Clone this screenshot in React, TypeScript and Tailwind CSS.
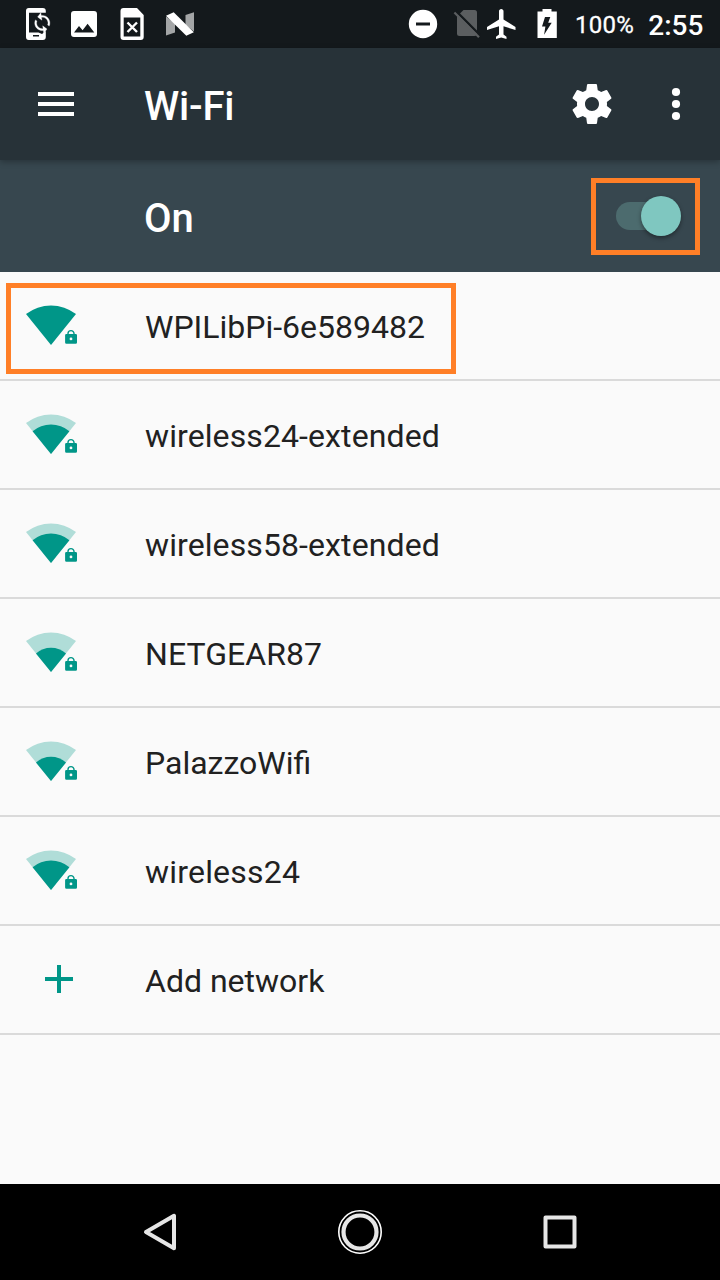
import React from "react";

type Strength = "full" | "good" | "fair";

const networks: { name: string; strength: Strength; tracking: string; marked?: boolean }[] = [
  { name: "WPILibPi-6e589482", strength: "full", tracking: "tracking-normal", marked: true },
  { name: "wireless24-extended", strength: "good", tracking: "tracking-[0.1px]" },
  { name: "wireless58-extended", strength: "good", tracking: "tracking-[0.1px]" },
  { name: "NETGEAR87", strength: "fair", tracking: "tracking-[0.05px]" },
  { name: "PalazzoWifi", strength: "fair", tracking: "tracking-normal" },
  { name: "wireless24", strength: "good", tracking: "tracking-[0.2px]" },
];

const wedges: Record<Strength, string> = {
  full: "M2 11A41 41 0 0 1 52 11L27 42Z",
  good: "M8.6 19.2A28.7 28.7 0 0 1 45.4 19.2L27 42Z",
  fair: "M12 23.5A22.6 22.6 0 0 1 42 23.5L27 42Z",
};

function WifiIcon({ strength }: { strength: Strength }) {
  return (
    <svg className="h-[45px] w-14 shrink-0" viewBox="0 0 56 45" fill="#009688">
      {strength !== "full" && <path d={wedges.full} fill="#b0ddd8" />}
      <path d={wedges[strength]} />
      <path d="M44 32V30.6a3 3 0 0 1 6 0V32" fill="none" stroke="#009688" strokeWidth="1.4" />
      <path
        fillRule="evenodd"
        d="M42.4 31h9.3a1.3 1.3 0 0 1 1.3 1.3v7.1a1.3 1.3 0 0 1-1.3 1.3h-9.3a1.3 1.3 0 0 1-1.3-1.3v-7.1a1.3 1.3 0 0 1 1.3-1.3zM47 34.5a1.4 1.4 0 1 0 0 2.8a1.4 1.4 0 0 0 0-2.8z"
      />
    </svg>
  );
}

function StatusBar() {
  return (
    <div className="flex h-12 items-center bg-[#14191c] text-white">
      <svg className="ml-6 h-9 w-7" viewBox="24 6 28 36" fill="#fff">
        <path
          fillRule="evenodd"
          d="M29.2 8H42.8A3 3 0 0 1 45.8 11V12.7H29V32.5H38.5L42 34L45.8 31V37A3 3 0 0 1 42.8 40H29.2A3 3 0 0 1 26 37V11A3 3 0 0 1 29.2 8zM33 35V36.6H39V35z"
        />
        <path
          transform="translate(42.3 23) rotate(-8) scale(.95) translate(-12 -12)"
          stroke="#fff"
          strokeWidth=".3"
          d="M12 4V1L8 5l4 4V6c3.31 0 6 2.69 6 6 0 1.01-.25 1.97-.7 2.8l1.46 1.46C19.54 15.03 20 13.57 20 12c0-4.42-3.58-8-8-8zm0 14c-3.31 0-6-2.69-6-6 0-1.01.25-1.97.7-2.8L5.24 7.74C4.46 8.97 4 10.43 4 12c0 4.42 3.58 8 8 8v3l4-4-4-4v3z"
        />
      </svg>
      <svg className="ml-[18px] h-7 w-7" viewBox="70 10 28 28">
        <path
          fill="#fff"
          fillRule="evenodd"
          d="M74 11H94A3 3 0 0 1 97 14V34A3 3 0 0 1 94 37H74A3 3 0 0 1 71 34V14A3 3 0 0 1 74 11zM74 32.5H94.3L87.6 23.7L82.6 30.2L79 25.9z"
        />
      </svg>
      <svg className="ml-[21px] h-9 w-[26px]" viewBox="119 6 26 36">
        <path
          fill="#fff"
          fillRule="evenodd"
          d="M123.5 8H137L143.7 15V37A3 3 0 0 1 140.7 40H123.5A3 3 0 0 1 120.5 37V11A3 3 0 0 1 123.5 8zM123.7 17.5V36.5H140.3V17.5z"
        />
        <path d="M127.5 22.5L137 32M137 22.5L127.5 32" stroke="#fff" strokeWidth="2.4" />
      </svg>
      <svg className="ml-5 h-7 w-[30px]" viewBox="165 10 30 28">
        <path d="M166 16.5L175 23.5V32.5L166 35.5ZM185.5 15L194 12.3V31.5L185.5 25Z" fill="#a3a5a6" />
        <path d="M166 15.8L173.7 12.3L193.8 32.2L186.3 35.7Z" fill="#fff" />
      </svg>
      <svg className="ml-[213px] h-[30px] w-[30px]" viewBox="0 0 30 30">
        <circle cx="15" cy="15" r="14.2" fill="#fff" />
        <path d="M8 15h14" stroke="#14191c" strokeWidth="3" />
      </svg>
      <svg className="ml-[15px] h-[30px] w-7" viewBox="453 10 28 30">
        <path d="M463.5 11H474.5A2.5 2.5 0 0 1 477 13.5V34.5A2.5 2.5 0 0 1 474.5 37H459.5A2.5 2.5 0 0 1 457 34.5V17.5Z" fill="#5b5e60" />
        <path d="M456 12.2L481 37.2" stroke="#14191c" strokeWidth="2.4" />
        <path d="M454.4 13.5L479 38.3" stroke="#5b5e60" strokeWidth="2.2" />
      </svg>
      <svg className="ml-[3px] h-9 w-9" viewBox="0 0 24 24" fill="#fff">
        <path d="M21 16v-2l-8-5V3.5c0-.83-.67-1.5-1.5-1.5S10 2.67 10 3.5V9l-8 5v2l8-2.5V19l-2 1.5V22l3.5-1 3.5 1v-1.5L13 19v-5.5l8 2.5z" />
      </svg>
      <svg className="ml-[17px] h-[30px] w-5" viewBox="537.5 9 20 30">
        <path fill="#fff" d="M543 9H552V11.6H557.3V38H538V11.6H543Z" />
        <path fill="#14191c" d="M545.5 17H550.8L548.7 22.7H552.2L544.6 34.8L545.9 26.6H542.5Z" />
      </svg>
      <span className="ml-[18px] mt-0.5 text-[24px] leading-7 tracking-[0.3px] [-webkit-text-stroke:0.3px_white]">100%</span>
      <span className="ml-[14px] mt-[3px] text-[28px] font-medium leading-8">2:55</span>
    </div>
  );
}

function Toolbar() {
  return (
    <header className="relative flex h-28 items-center bg-[#273238] text-white shadow-[0_2px_6px_rgba(0,0,0,0.28)]">
      <svg className="ml-8 h-12 w-12" viewBox="0 0 48 48">
        <path d="M6 14h36M6 24h36M6 34h36" stroke="#fff" strokeWidth="4" />
      </svg>
      <h1 className="ml-16 mt-1.5 text-[40px] font-medium leading-[48px] tracking-[-0.2px]">Wi-Fi</h1>
      <svg className="ml-auto h-12 w-12" viewBox="0 0 24 24" fill="#fff">
        <path d="M19.43 12.98c.04-.32.07-.64.07-.98s-.03-.66-.07-.98l2.11-1.65c.19-.15.24-.42.12-.64l-2-3.46c-.12-.22-.39-.3-.61-.22l-2.49 1c-.52-.4-1.08-.73-1.69-.98l-.38-2.65C14.46 2.18 14.25 2 14 2h-4c-.25 0-.46.18-.49.42l-.38 2.65c-.61.25-1.17.59-1.69.98l-2.49-1c-.23-.09-.49 0-.61.22l-2 3.46c-.13.22-.07.49.12.64l2.11 1.65c-.04.32-.07.65-.07.98s.03.66.07.98l-2.11 1.65c-.19.15-.24.42-.12.64l2 3.46c.12.22.39.3.61.22l2.49-1c.52.4 1.08.73 1.69.98l.38 2.65c.03.24.24.42.49.42h4c.25 0 .46-.18.49-.42l.38-2.65c.61-.25 1.17-.59 1.69-.98l2.49 1c.23.09.49 0 .61-.22l2-3.46c.12-.22.07-.49-.12-.64l-2.11-1.65zM12 15.5c-1.93 0-3.5-1.57-3.5-3.5s1.57-3.5 3.5-3.5 3.5 1.57 3.5 3.5-1.57 3.5-3.5 3.5z" />
      </svg>
      <svg className="ml-9 mr-5 h-12 w-12" viewBox="0 0 48 48" fill="#fff">
        <circle cx="24" cy="12" r="4.1" />
        <circle cx="24" cy="24" r="4.1" />
        <circle cx="24" cy="36" r="4.1" />
      </svg>
    </header>
  );
}

function SwitchBar() {
  return (
    <div className="flex h-28 items-center justify-between bg-[#37474f] pl-36 pr-5 text-white">
      <span className="mt-1.5 text-[40px] font-medium leading-[48px]">On</span>
      <div className="flex h-[77px] w-[109px] items-center border-[5px] border-[#ff7f27] pl-5">
        <div role="switch" aria-checked="true" className="-mt-px flex h-7 w-[65px] items-center justify-end rounded-full bg-[linear-gradient(90deg,#4c6b6e_52px,transparent_52px)]">
          <div className="size-10 shrink-0 rounded-full bg-[#7fc7c0] shadow-[0_2px_4px_rgba(0,0,0,0.4)]" />
        </div>
      </div>
    </div>
  );
}

export default function App() {
  return (
    <div className="flex h-[1280px] w-[720px] flex-col overflow-hidden bg-[#fafafa] font-['Roboto',sans-serif] text-[#212121]">
      <StatusBar />
      <Toolbar />
      <SwitchBar />
      <ul className="flex-1">
        {networks.map((n) => (
          <li key={n.name} className="relative flex h-[109px] items-center border-b-2 border-[#dadada] pl-6">
            <WifiIcon strength={n.strength} />
            <span className={`ml-[65px] mt-[3px] text-[32px] leading-10 ${n.tracking}`}>{n.name}</span>
            {n.marked && <div className="absolute left-1.5 top-[11px] h-[91px] w-[450px] border-[5px] border-[#ff7f27]" />}
          </li>
        ))}
        <li className="flex h-[109px] items-center border-b-2 border-[#dadada] pl-[45px]">
          <svg className="mb-[1px] h-7 w-7" viewBox="0 0 28 28">
            <path d="M14 0v28M0 14h28" stroke="#009688" strokeWidth="4" />
          </svg>
          <span className="ml-[72px] mt-[3px] text-[32px] leading-10">Add network</span>
        </li>
      </ul>
      <nav className="flex h-24 items-center justify-between bg-black px-[136px]">
        <svg className="size-12" viewBox="0 0 48 48" fill="none">
          <path d="M38 7.8V40.2L10 24Z" stroke="#e6e6e6" strokeWidth="4" strokeLinejoin="round" />
        </svg>
        <svg className="size-12" viewBox="0 0 48 48" fill="none">
          <circle cx="24" cy="24" r="21.2" stroke="#fff" strokeWidth="1.6" />
          <circle cx="24" cy="24" r="16.5" stroke="#e6e6e6" strokeWidth="4.2" />
        </svg>
        <svg className="size-12" viewBox="0 0 48 48" fill="none">
          <rect x="9.5" y="9.5" width="29" height="29" stroke="#e6e6e6" strokeWidth="4" strokeLinejoin="round" />
        </svg>
      </nav>
    </div>
  );
}
